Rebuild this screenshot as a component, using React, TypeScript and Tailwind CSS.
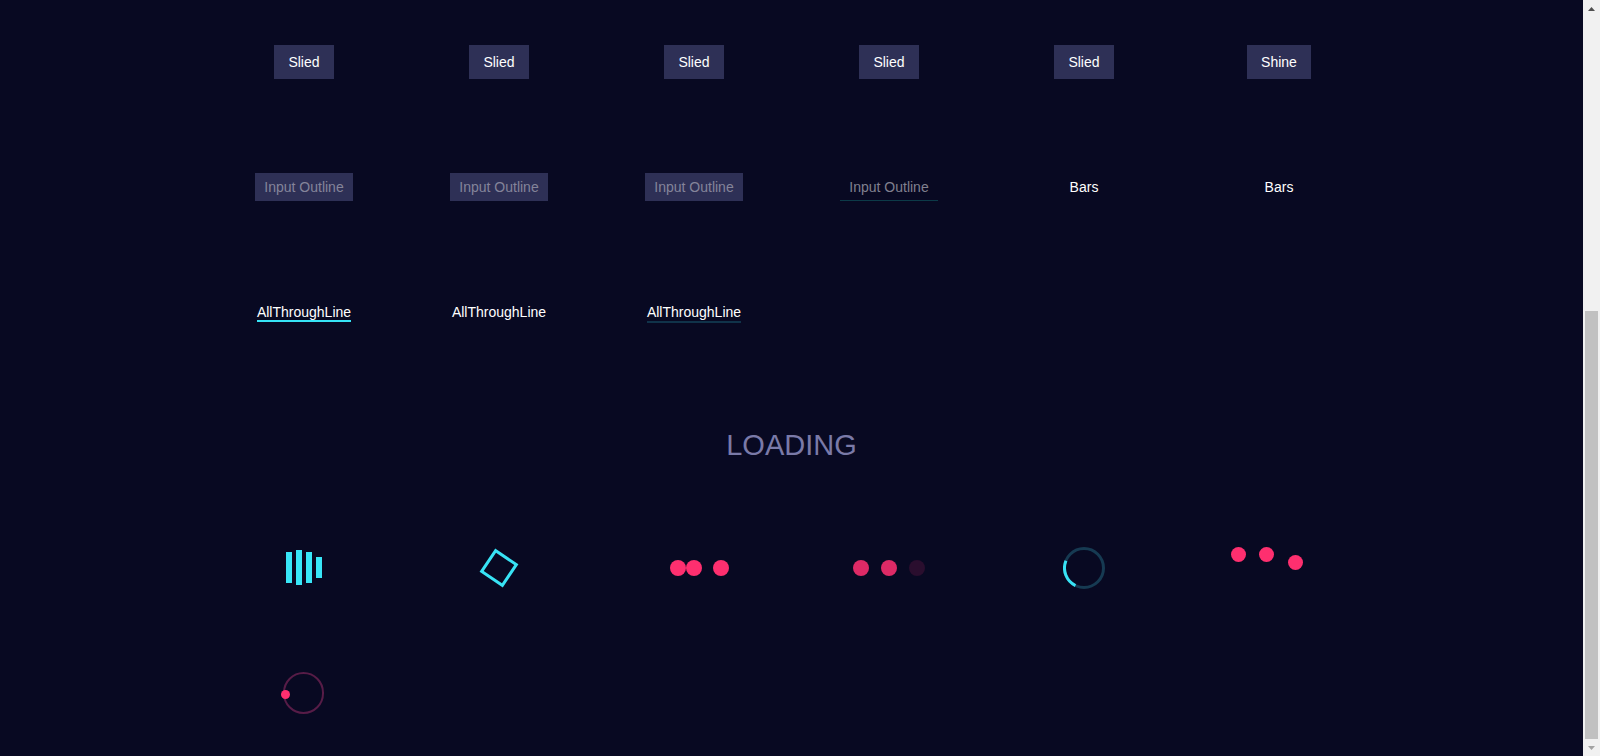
import React from "react"

const font = { fontFamily: '"Liberation Sans", Arial, sans-serif' }

// one cell of the demo grid
const Cell = ({ children }: { children?: React.ReactNode }) => (
  <div className="h-[125px] flex items-center justify-center">{children}</div>
)

const SlideButton = ({ label }: { label: string }) => (
  <button className="bg-[#2e3056] text-white text-[14px] leading-[20px] px-[14px] py-[7px] mb-[2px]">{label}</button>
)

const FilledInput = () => (
  <div className="bg-[#2e3056] text-[#84849a] text-[14px] leading-[16px] px-[9px] py-[6px] mb-[2px]">Input Outline</div>
)

const Dot = ({ className = "" }: { className?: string }) => (
  <span className={`block w-[16px] h-[16px] rounded-full ${className}`} />
)

const Spinner = () => (
  <svg width="42" height="42" viewBox="0 0 42 42">
    <circle cx="21" cy="21" r="19.5" fill="none" stroke="#163a52" strokeWidth="3" />
    <path d="M 12.45 38.53 A 19.5 19.5 0 0 1 2.92 13.7" fill="none" stroke="#38e3f5" strokeWidth="3" />
  </svg>
)

export default function App() {
  return (
    <div className="flex h-[756px] overflow-hidden bg-[#080922]" style={font}>
      <main className="flex-1">
        <div className="w-[1170px] mx-auto">
          {/* buttons */}
          <div className="grid grid-cols-6">
            {["Slied", "Slied", "Slied", "Slied", "Slied", "Shine"].map((l, i) => (
              <Cell key={i}>
                <SlideButton label={l} />
              </Cell>
            ))}
          </div>

          {/* inputs */}
          <div className="grid grid-cols-6">
            <Cell><FilledInput /></Cell>
            <Cell><FilledInput /></Cell>
            <Cell><FilledInput /></Cell>
            <Cell>
              <div className="text-[#80808f] text-[14px] leading-[16px] pl-[9px] pr-[9px] pt-[6px] pb-[5px] mb-[2px] border-b border-[#0c3a48]">
                Input Outline
              </div>
            </Cell>
            <Cell><span className="text-white text-[14px]">Bars</span></Cell>
            <Cell><span className="text-white text-[14px]">Bars</span></Cell>
          </div>

          {/* lines */}
          <div className="grid grid-cols-6">
            <Cell>
              <span className="text-white text-[14px] leading-[16px] border-b-2 border-[#36e4f6] mt-[1px]">AllThroughLine</span>
            </Cell>
            <Cell><span className="text-white text-[14px]">AllThroughLine</span></Cell>
            <Cell>
              <span className="text-white text-[14px] leading-[16px] border-b-2 border-[#10334a] mt-[1px] pb-[1px]">AllThroughLine</span>
            </Cell>
            <Cell />
            <Cell />
            <Cell />
          </div>

          <h2 className="h-[130px] pt-[54px] text-center text-[29px] leading-[33px] text-[#7a7aa8]">LOADING</h2>

          {/* loaders */}
          <div className="grid grid-cols-6">
            <Cell>
              <div className="flex items-center gap-[4px]">
                <span className="block w-[6px] h-[31px] bg-[#38e6f8]" />
                <span className="block w-[6px] h-[35px] bg-[#38e6f8]" />
                <span className="block w-[6px] h-[31px] bg-[#38e6f8]" />
                <span className="block w-[6px] h-[21px] bg-[#38e6f8]" />
              </div>
            </Cell>
            <Cell>
              <div className="w-[28px] h-[28px] border-[3px] border-[#38e3f5] rotate-[34deg]" />
            </Cell>
            <Cell>
              <div className="flex items-center ml-[11px]">
                <Dot className="bg-[#fe2f6f]" />
                <Dot className="bg-[#fe2f6f]" />
                <Dot className="bg-[#fe2f6f] ml-[11px]" />
              </div>
            </Cell>
            <Cell>
              <div className="flex items-center gap-[12px]">
                <Dot className="bg-[#de2a66]" />
                <Dot className="bg-[#de2a66]" />
                <Dot className="bg-[#2a0e2e]" />
              </div>
            </Cell>
            <Cell>
              <Spinner />
            </Cell>
            <Cell>
              <div className="flex items-start gap-[13px] mr-[24px] mb-[19px]">
                <span className="block w-[15px] h-[15px] rounded-full bg-[#fe2f6f]" />
                <span className="block w-[15px] h-[15px] rounded-full bg-[#fe2f6f]" />
                <span className="block w-[15px] h-[15px] rounded-full bg-[#fe2f6f] mt-[8px] ml-[1px]" />
              </div>
            </Cell>
          </div>

          <div className="grid grid-cols-6">
            <Cell>
              <div className="relative w-[41px] h-[42px] rounded-full border-2 border-[#571c47] ml-[-1px]">
                <span className="absolute left-[-4px] top-[16px] w-[9px] h-[9px] rounded-full bg-[#fe2f6f]" />
              </div>
            </Cell>
          </div>
        </div>
      </main>

      {/* browser scrollbar, page scrolled to the bottom */}
      <div className="w-[17px] flex flex-col bg-[#f1f1f1]">
        <div className="h-[17px] flex items-center justify-center">
          <svg width="7" height="4" viewBox="0 0 7 4">
            <path d="M3.5 0 L7 4 L0 4 Z" fill="#505050" />
          </svg>
        </div>
        <div className="flex-1" />
        <div className="h-[428px] mx-[2px] bg-[#c1c1c1]" />
        <div className="h-[17px] flex items-center justify-center">
          <svg width="7" height="4" viewBox="0 0 7 4">
            <path d="M0 0 L7 0 L3.5 4 Z" fill="#a3a3a3" />
          </svg>
        </div>
      </div>
    </div>
  )
}
